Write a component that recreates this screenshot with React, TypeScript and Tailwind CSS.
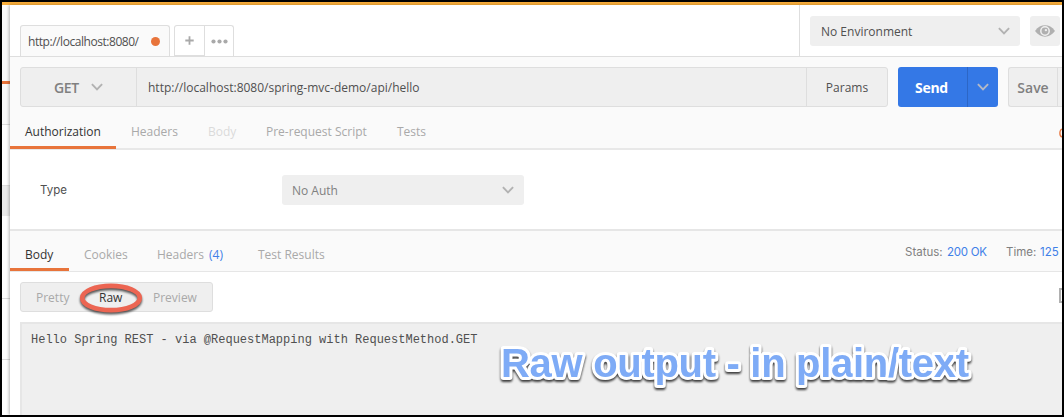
import React from "react";

function Chevron({ className }: { className: string }) {
  return (
    <svg viewBox="0 0 12 8" className={className} fill="none" stroke="currentColor" strokeWidth="1.9">
      <path d="M0.9 1.1 L6 6.3 L11.1 1.1" />
    </svg>
  );
}

function Sidebar() {
  return (
    <aside className="flex w-2 shrink-0 flex-col bg-white">
      <div className="h-[76px] bg-[#fafafa]" />
      <div className="h-[3px] bg-[#e8743b]" />
      <div className="h-[41px] border-b border-[#dcdcdc] bg-[#fafafa]" />
      <div className="h-[61px] border-b border-[#dcdcdc]" />
      <div className="h-[30px] bg-[#e9e9e9]" />
      <div className="h-[83px] border-b border-[#dcdcdc]" />
      <div className="h-[61px] border-b border-[#dcdcdc]" />
    </aside>
  );
}

function Header() {
  return (
    <header className="flex h-[52px] shrink-0 border-b border-[#dedede] bg-white">
      <div className="flex flex-1 items-end pl-[10px]">
        <div className="flex h-[31px] w-[150px] items-center rounded-t-[3px] border border-b-0 border-[#dedede] bg-[#fafafa] pl-[7px] text-[#505050]">
          <span className="w-[110px] pt-[2px] text-[12px] tracking-[-0.45px]">http://localhost:8080/</span>
          <span className="ml-[13px] h-[9px] w-[9px] rounded-full bg-[#e8743b]" />
        </div>
        <div className="ml-1 flex h-[31px] w-[60px] rounded-t-[3px] border border-b-0 border-[#dedede] text-[#a9a9a9]">
          <div className="flex w-[30px] items-center justify-center border-r border-b border-[#dedede]">
            <svg viewBox="0 0 9 9" className="h-[9px] w-[9px]" stroke="currentColor" strokeWidth="1.8">
              <path d="M4.5 0.3V8.7M0.3 4.5H8.7" />
            </svg>
          </div>
          <div className="flex flex-1 items-center justify-center">
            <svg viewBox="0 0 17 5" className="h-[5px] w-[17px]" fill="currentColor">
              <circle cx="2.5" cy="2.5" r="2.1" />
              <circle cx="8.5" cy="2.5" r="2.1" />
              <circle cx="14.5" cy="2.5" r="2.1" />
            </svg>
          </div>
        </div>
      </div>
      <div className="flex w-[263px] border-l border-[#dedede] pt-[11px] pl-[10px]">
        <div className="flex h-[30px] w-[210px] items-center justify-between rounded-[3px] bg-[#efefef] pr-[10px] pl-[11px]">
          <span className="pt-[2px] text-[12px] text-[#505050]">No Environment</span>
          <Chevron className="h-2 w-3 text-[#b2b2b2]" />
        </div>
        <div className="ml-[10px] flex h-[30px] w-[30px] items-center justify-center rounded-[3px] bg-[#efefef]">
          <svg viewBox="0 0 20 12" className="h-3 w-5">
            <path d="M0 6C3 2 6.2 0.3 10 0.3S17 2 20 6C17 10 13.8 11.7 10 11.7S3 10 0 6Z" fill="#b0b0b0" />
            <circle cx="10" cy="6" r="4.2" fill="none" stroke="#efefef" strokeWidth="1.5" />
            <circle cx="10.9" cy="5.1" r="1.2" fill="#efefef" />
          </svg>
        </div>
      </div>
    </header>
  );
}

function RequestBar() {
  return (
    <div className="flex h-[61px] shrink-0 bg-[#fafafa] pt-[10px] pl-[10px]">
      <div className="flex h-10 w-[868px] rounded-[3px] border border-[#dedede] bg-[#efefef] text-[#505050]">
        <div className="flex w-[116px] items-center border-r border-[#dedede] pl-[33px] text-[#808080]">
          <span className="w-[27px] text-[14px] font-semibold tracking-[-0.3px]">GET</span>
          <Chevron className="ml-[10px] h-[8px] w-3 text-[#b2b2b2]" />
        </div>
        <div className="flex flex-1 items-center pt-[2px] pl-[11px] text-[12px]">http://localhost:8080/spring-mvc-demo/api/hello</div>
        <div className="flex w-[81px] items-center justify-center border-l border-[#dedede] pt-[2px] text-[12px]">Params</div>
      </div>
      <div className="ml-[10px] flex h-10 w-[100px] rounded-[3px] bg-[#3478e6]">
        <div className="flex w-[70px] items-center justify-center border-r border-[#2c66c6] pr-[2px] text-[14px] font-bold tracking-[-0.3px] text-white">Send</div>
        <div className="flex flex-1 items-center justify-center">
          <Chevron className="h-[8px] w-[12px] text-[#b4b9c6]" />
        </div>
      </div>
      <div className="ml-[10px] flex h-10 w-[54px] rounded-l-[3px] border border-r-0 border-[#dedede] bg-[#efefef]">
        <div className="flex w-[49px] items-center justify-center border-r border-[#dedede] text-[14px] font-semibold text-[#808080]">Save</div>
      </div>
    </div>
  );
}

function RequestTabs() {
  return (
    <nav className="flex h-8 shrink-0 border-b-2 border-[#e8e8e8] bg-[#fafafa] text-[12px] leading-[28px] text-[#a9a9a9]">
      <span className="-mb-[1px] h-[31px] w-[106px] border-b-3 border-[#e8743b] pl-[15px] text-[#333]">Authorization</span>
      <span className="ml-[15px] w-[77px]">Headers</span>
      <span className="w-[58px] text-[#dadada]">Body</span>
      <span className="w-[131px]">Pre-request Script</span>
      <span className="flex-1">Tests</span>
      <svg viewBox="0 0 3 10" className="mt-[10px] h-[10px] w-[3px]" fill="none" stroke="#e8743b" strokeWidth="1.3">
        <path d="M3.5 1C0 1 0 9 3.5 9" />
      </svg>
    </nav>
  );
}

function ResponseTabs() {
  return (
    <nav className="flex h-[43px] shrink-0 border-t-2 border-b border-[#e6e6e6] bg-[#fafafa] text-[12px] leading-[48px] text-[#a9a9a9]">
      <span className="h-10 w-[59px] border-b-3 border-[#e8743b] pl-[15px] text-[#333]">Body</span>
      <span className="ml-[15px] w-[73px]">Cookies</span>
      <span className="w-[101px]">Headers <span className="ml-[2px] text-[#3f80e8]">(4)</span></span>
      <span>Test Results</span>
      <div className="ml-auto flex w-[157px] font-['Inter'] text-[11.5px] leading-[42px] whitespace-nowrap text-[#808080]">
        <span className="w-[42px]">Status:</span>
        <span className="w-[59px] tracking-[-0.25px] text-[#3f80e8]">200 OK</span>
        <span className="w-[34px]">Time:</span>
        <span className="text-[#3f80e8]">125</span>
      </div>
    </nav>
  );
}

function ViewSwitch() {
  return (
    <div className="flex h-[50px] shrink-0 items-start pt-[10px] pl-[10px]">
      <div className="relative flex h-[30px] w-[193px] items-center rounded-[3px] border border-[#dedede] bg-[#efefef] pl-[15px] text-[12px] text-[#a9a9a9]">
        <span className="w-[63px] pt-[2px]">Pretty</span>
        <span className="w-[54px] pt-[2px] text-[#333]">Raw</span>
        <span className="pt-[2px]">Preview</span>
        <svg viewBox="0 0 70 40" className="absolute top-[-5px] left-[55px] h-10 w-[70px] drop-shadow-[0_2px_1px_rgba(0,0,0,0.65)]" fill="none">
          <ellipse cx="35" cy="20" rx="28.8" ry="12.2" stroke="#ec6552" strokeWidth="4.7" />
        </svg>
      </div>
      <div className="mt-[6px] ml-auto h-[15px] w-[3px] border-2 border-r-0 border-[#b0b0b0]" />
    </div>
  );
}

export default function App() {
  return (
    <div className="flex h-[417px] w-[1064px] flex-col overflow-hidden border-2 border-black bg-white font-['Open_Sans',sans-serif]">
      <div className="h-[3px] shrink-0 bg-[#f9ae3b]" />
      <div className="flex min-h-0 flex-1">
        <Sidebar />
        <main className="z-10 flex min-w-0 flex-1 flex-col bg-white shadow-[-1px_0_3px_rgba(0,0,0,0.28)]">
          <Header />
          <RequestBar />
          <RequestTabs />
          <section className="flex h-[79px] shrink-0 items-center pl-[30px] text-[12px]">
            <span className="w-[242px] pt-[2px] font-['Inter'] text-[11.5px] text-[#505050]">Type</span>
            <div className="flex h-[30px] w-[242px] items-center justify-between rounded-[3px] bg-[#efefef] pr-[10px] pl-[10px] text-[#808080]">
              <span className="pt-[2px]">No Auth</span>
              <Chevron className="h-2 w-3 text-[#b2b2b2]" />
            </div>
          </section>
          <ResponseTabs />
          <ViewSwitch />
          <section className="ml-[10px] flex min-h-0 flex-1 items-start border-t-2 border-l-2 border-[#e6e6e6] bg-[#efefef]">
            <pre className="mt-[8px] ml-[9px] w-[470px] font-['Liberation_Mono',monospace] text-[12px] leading-[16px] text-[#505050]">Hello Spring REST - via @RequestMapping with RequestMethod.GET</pre>
            <svg viewBox="0 0 490 60" className="mt-[10px] ml-[-8px] h-[60px] w-[490px] shrink-0 drop-shadow-[0_2px_1px_rgba(0,0,0,0.75)]">
              <text x="8" y="43" textLength="468" className="font-['Liberation_Sans',sans-serif] text-[40px] font-bold" fill="#7eabf6" stroke="#fff" strokeWidth="6" strokeLinejoin="round" paintOrder="stroke">Raw output - in plain/text</text>
            </svg>
          </section>
        </main>
      </div>
    </div>
  );
}
